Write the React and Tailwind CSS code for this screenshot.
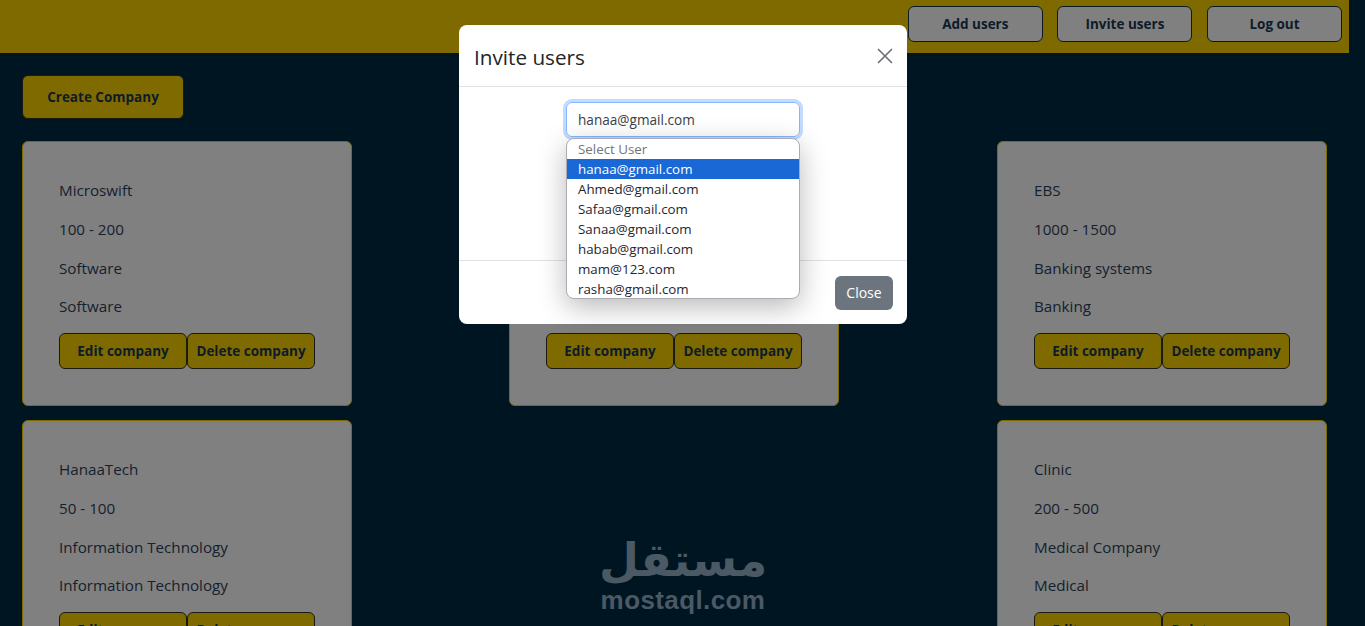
const companies = [
  { name: 'Microswift', size: '100 - 200', field: 'Software', kind: 'Software' },
  { name: 'Acme', size: '100 - 200', field: 'Software', kind: 'Software' },
  { name: 'EBS', size: '1000 - 1500', field: 'Banking systems', kind: 'Banking' },
  { name: 'HanaaTech', size: '50 - 100', field: 'Information Technology', kind: 'Information Technology' },
  null,
  { name: 'Clinic', size: '200 - 500', field: 'Medical Company', kind: 'Medical' },
];

const users = [
  'hanaa@gmail.com',
  'Ahmed@gmail.com',
  'Safaa@gmail.com',
  'Sanaa@gmail.com',
  'habab@gmail.com',
  'mam@123.com',
  'rasha@gmail.com',
];

function NavButton({ label }) {
  return (
    <button className="h-[36px] w-[135px] rounded-[6px] border border-[#0c1a24] bg-[#808080] text-[13.5px] font-bold text-[#0d1b2a]">
      {label}
    </button>
  );
}

function CompanyCard({ company }) {
  return (
    <div className="h-[265px] w-[330px] rounded-[6px] border border-[#7f6a00] bg-[#808080] pl-[36px] pt-[37px] text-[15.2px] leading-[22.5px] text-[#14202e]">
      <p className="mb-[16.3px]">{company.name}</p>
      <p className="mb-[16.3px]">{company.size}</p>
      <p className="mb-[16.3px]">{company.field}</p>
      <p className="mb-[15px]">{company.kind}</p>
      <div className="flex">
        <button className="h-[36px] w-[128px] rounded-[6px] border border-[#1a1a14] bg-[#7f6a00] text-[13.5px] font-bold text-[#0d1b2a]">
          Edit company
        </button>
        <button className="h-[36px] w-[128px] rounded-[6px] border border-[#1a1a14] bg-[#7f6a00] text-[13.5px] font-bold text-[#0d1b2a]">
          Delete company
        </button>
      </div>
    </div>
  );
}

function InviteModal() {
  return (
    <div className="absolute left-[459px] top-[25px] flex h-[299px] w-[448px] flex-col rounded-[8px] bg-white text-[#212529]">
      {/* Header */}
      <div className="flex h-[62px] items-center justify-between border-b border-[#dee2e6] pl-[15px] pr-[14px]">
        <h5 className="mt-[3px] text-[20.7px] font-medium leading-none">Invite users</h5>
        <svg width="16" height="16" viewBox="0 0 16 16" aria-hidden="true">
          <path d="M1 1l14 14M15 1L1 15" stroke="#6b6f73" strokeWidth="1.6" fill="none" />
        </svg>
      </div>

      {/* Body */}
      <div className="relative h-[174px] border-b border-[#dee2e6]">
        <div className="ml-[107px] mt-[15px] flex h-[35px] w-[234px] items-center rounded-[6px] border border-[#86b7fe] pl-[11px] pt-[2px] text-[13.6px] text-[#3b4147] shadow-[0_0_0_3px_#c2dbfe]">
          hanaa@gmail.com
        </div>

        {/* Open select menu */}
        <div className="absolute left-[107px] top-[51px] z-10 h-[161px] w-[234px] overflow-hidden rounded-[8px] border border-[#a9adb3] bg-white text-[13.33px] leading-[20px] shadow-[0_8px_28px_rgba(0,0,0,0.28)]">
          <div className="h-[20px] pl-[11px] text-[#6f757b]">Select User</div>
          {users.map((user, i) => (
            <div
              key={user}
              className={
                i === 0
                  ? 'h-[20px] bg-[#1a68d6] pl-[11px] text-white'
                  : 'h-[20px] pl-[11px] text-[#1f2530]'
              }
            >
              {user}
            </div>
          ))}
        </div>
      </div>

      {/* Footer */}
      <div className="flex flex-1 items-center justify-end pr-[14px]">
        <button className="h-[34px] w-[58px] rounded-[6px] bg-[#6c757d] text-[14px] text-white">
          Close
        </button>
      </div>
    </div>
  );
}

export default function App() {
  return (
    <div className="relative h-[626px] overflow-hidden bg-[#001522] font-['Open_Sans','Noto_Sans',sans-serif]">
      <div className="w-[1349px]">
        <nav className="flex h-[53px] justify-end gap-[14.6px] bg-[#7f6a00] pr-[7px] pt-[6px]">
          <NavButton label="Add users" />
          <NavButton label="Invite users" />
          <NavButton label="Log out" />
        </nav>

        <div className="px-[22px] pt-[22px]">
          <button className="h-[44px] w-[162px] rounded-[6px] border border-[#1a1a14] bg-[#7f6a00] text-[13.5px] font-bold text-[#0d1b2a]">
            Create Company
          </button>

          <div className="mt-[22px] grid grid-cols-[330px_331px_330px] gap-x-[157px] gap-y-[14px]">
            {companies.map((company, i) =>
              company ? <CompanyCard key={company.name} company={company} /> : <div key={i} />,
            )}
          </div>
        </div>
      </div>

      <InviteModal />

      {/* Watermark */}
      <div className="absolute left-[600px] top-[533px] flex w-[166px] flex-col items-center text-[#4a5964]">
        <span dir="rtl" className="font-['DejaVu_Sans',sans-serif] text-[46px] font-bold leading-[55px]">
          مستقل
        </span>
        <span className="font-['Liberation_Sans',sans-serif] text-[26px] font-bold leading-[24px] tracking-[0.4px]">
          mostaql.com
        </span>
      </div>
    </div>
  );
}
